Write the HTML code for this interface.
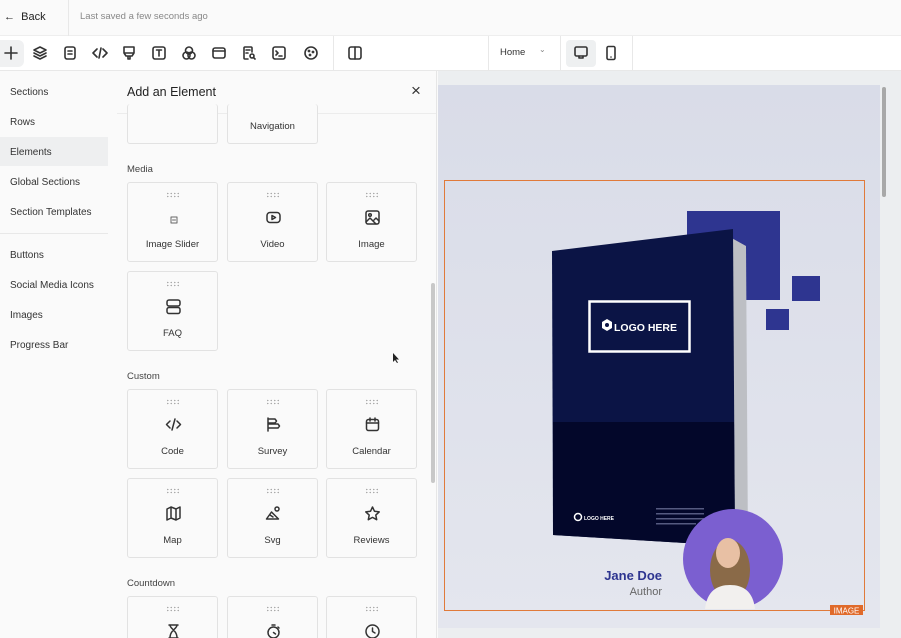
<!DOCTYPE html>
<html><head><meta charset="utf-8"><style>
*{box-sizing:border-box;margin:0;padding:0}
html,body{width:901px;height:638px;overflow:hidden}
body{font-family:"Liberation Sans",sans-serif;background:#fafafa;position:relative;color:#222}
.abs{position:absolute}
svg{display:block}
.ic{position:absolute;width:16px;height:16px;fill:none;stroke:#333;stroke-width:1.6;stroke-linecap:round;stroke-linejoin:round}
.nav{position:absolute;left:10px;font-size:10px;color:#333}
.card{position:absolute;width:91px;height:80px;border:1px solid #e2e2e2;border-radius:3px;background:#fafafa}
.card .dots{position:absolute;top:9px;left:38px;width:14px;height:6px;background-image:radial-gradient(circle,#aaa 0.7px,transparent 0.8px);background-size:3.5px 3px}
.card .lb{position:absolute;left:0;right:0;top:56px;text-align:center;font-size:9.5px;color:#333}
.card svg{position:absolute;left:37px;top:26px;width:17px;height:17px;fill:none;stroke:#333;stroke-width:1.5;stroke-linecap:round;stroke-linejoin:round}
.sec{position:absolute;left:127px;font-size:9.5px;color:#444}
</style></head><body>
<!-- top bar -->
<div class="abs" style="left:0;top:0;width:901px;height:36px;background:#fafafa;border-bottom:1px solid #eee"></div>
<div class="abs" style="left:4px;top:11px;font-size:11px;color:#222">&larr;&nbsp;&nbsp;Back</div>
<div class="abs" style="left:68px;top:0;width:1px;height:36px;background:#e8e8e8"></div>
<div class="abs" style="left:80px;top:11px;font-size:9.5px;color:#888">Last saved a few seconds ago</div>
<!-- toolbar -->
<div class="abs" style="left:0;top:36px;width:901px;height:35px;background:#fff;border-bottom:1px solid #e8e8e8"></div>
<div class="abs" style="left:0;top:40px;width:24px;height:27px;background:#f0f1f2;border-radius:0 6px 6px 0"></div>
<svg class="ic" style="left:3px;top:45px" viewBox="0 0 16 16"><path d="M8 2v12M2 8h12"/></svg>
<svg class="ic" style="left:32px;top:45px" viewBox="0 0 16 16"><path d="M8 2l6 3-6 3-6-3z M2 8l6 3 6-3 M2 11l6 3 6-3"/></svg>
<svg class="ic" style="left:62px;top:45px" viewBox="0 0 16 16"><rect x="3" y="2" width="10" height="12" rx="2"/><path d="M6 6h4M6 9h4"/></svg>
<svg class="ic" style="left:92px;top:45px" viewBox="0 0 16 16"><path d="M5 4L1 8l4 4M11 4l4 4-4 4M9 3L7 13"/></svg>
<svg class="ic" style="left:121px;top:45px" viewBox="0 0 16 16"><path d="M3 2h10v6H3z M3 8h10l-2 3H5z M7 11v3h2v-3"/></svg>
<svg class="ic" style="left:151px;top:45px" viewBox="0 0 16 16"><rect x="2" y="2" width="12" height="12" rx="2"/><path d="M5.5 5h5M8 5v6"/></svg>
<svg class="ic" style="left:181px;top:45px" viewBox="0 0 16 16"><circle cx="8" cy="5.5" r="3.5"/><circle cx="5.5" cy="10.5" r="3.5"/><circle cx="10.5" cy="10.5" r="3.5"/></svg>
<svg class="ic" style="left:211px;top:45px" viewBox="0 0 16 16"><rect x="2" y="3" width="12" height="10" rx="2"/><path d="M2 6h12"/></svg>
<svg class="ic" style="left:241px;top:45px" viewBox="0 0 16 16"><path d="M11 7V3a1 1 0 0 0-1-1H4a1 1 0 0 0-1 1v10a1 1 0 0 0 1 1h3M5 5h4M5 8h2"/><circle cx="11" cy="11" r="2"/><path d="M12.5 12.5L14 14"/></svg>
<svg class="ic" style="left:271px;top:45px" viewBox="0 0 16 16"><rect x="2" y="2" width="12" height="12" rx="2"/><path d="M5 6l2 2-2 2M8 11h3"/></svg>
<svg class="ic" style="left:303px;top:45px" viewBox="0 0 16 16"><circle cx="8" cy="8" r="6"/><circle cx="6" cy="6" r=".6"/><circle cx="10" cy="7" r=".6"/><circle cx="7" cy="10" r=".6"/></svg>
<div class="abs" style="left:333px;top:36px;width:1px;height:35px;background:#e8e8e8"></div>
<svg class="ic" style="left:347px;top:45px" viewBox="0 0 16 16"><rect x="2" y="2" width="12" height="12" rx="2"/><path d="M8 2v12"/></svg>
<div class="abs" style="left:488px;top:36px;width:1px;height:35px;background:#e8e8e8"></div>
<div class="abs" style="left:500px;top:47px;font-size:9.5px;color:#333">Home</div>
<div class="abs" style="left:539px;top:45px;font-size:8px;color:#888">&#8964;</div>
<div class="abs" style="left:560px;top:36px;width:1px;height:35px;background:#e8e8e8"></div>
<div class="abs" style="left:566px;top:40px;width:30px;height:27px;background:#eef0f1;border-radius:4px"></div>
<svg class="ic" style="left:573px;top:45px" viewBox="0 0 16 16"><rect x="2" y="2" width="12" height="9" rx="1.5"/><path d="M6 11v2h4v-2"/></svg>
<svg class="ic" style="left:603px;top:45px" viewBox="0 0 16 16"><rect x="4" y="1.5" width="8" height="13" rx="1.5"/><path d="M8 12h.01"/></svg>
<div class="abs" style="left:632px;top:36px;width:1px;height:35px;background:#e8e8e8"></div>
<!-- left nav -->
<div class="abs" style="left:0;top:71px;width:117px;height:567px;background:#fafafa"></div>
<div class="abs" style="left:0;top:137px;width:108px;height:29px;background:#eeeff0"></div>
<div class="nav" style="top:87px">Sections</div>
<div class="nav" style="top:117px">Rows</div>
<div class="nav" style="top:147px">Elements</div>
<div class="nav" style="top:177px">Global Sections</div>
<div class="nav" style="top:207px">Section Templates</div>
<div class="abs" style="left:0;top:233px;width:108px;height:1px;background:#e8e8e8"></div>
<div class="nav" style="top:250px">Buttons</div>
<div class="nav" style="top:280px">Social Media Icons</div>
<div class="nav" style="top:310px">Images</div>
<div class="nav" style="top:340px">Progress Bar</div>
<!-- panel -->
<div class="abs" style="left:117px;top:71px;width:320px;height:567px;background:#fafafa;border-right:1px solid #e6e6e6;overflow:hidden">
<div class="abs" style="left:10px;top:14px;font-size:12.5px;color:#222">Add an Element</div>
<div class="abs" style="left:294px;top:10px;font-size:17px;color:#333">&times;</div>
<div class="abs" style="left:0;top:42px;width:320px;height:1px;background:#ececec"></div>
<div class="abs" style="left:314px;top:212px;width:4px;height:200px;background:#c8c8c8;border-radius:2px"></div>
<div class="card" style="left:10px;top:33px;height:40px;border-top:none"></div>
<div class="card" style="left:110px;top:33px;height:40px;border-top:none"><div class="lb" style="top:17px">Navigation</div></div>
<div class="sec" style="left:10px;top:93px">Media</div>
<div class="card" style="left:10px;top:111px"><div class="dots"></div><svg viewBox="0 0 17 17" style="stroke-width:1;stroke:#666;top:28px"><rect x="6" y="6" width="6" height="6"/><path d="M7.5 9h3"/></svg><div class="lb">Image Slider</div></div>
<div class="card" style="left:110px;top:111px"><div class="dots"></div><svg viewBox="0 0 17 17"><rect x="2" y="3.5" width="13" height="10" rx="3"/><path d="M7 6.5v4l3.5-2z"/></svg><div class="lb">Video</div></div>
<div class="card" style="left:209px;top:111px"><div class="dots"></div><svg viewBox="0 0 17 17"><rect x="2" y="2" width="13" height="13" rx="2"/><circle cx="6" cy="6" r="1.3"/><path d="M2 13l4-4 6 6M10 11l2-2 3 3"/></svg><div class="lb">Image</div></div>
<div class="card" style="left:10px;top:200px"><div class="dots"></div><svg viewBox="0 0 17 17"><rect x="2" y="2" width="13" height="6" rx="2"/><rect x="2" y="9.5" width="13" height="6" rx="2"/></svg><div class="lb">FAQ</div></div>
<div class="sec" style="left:10px;top:300px">Custom</div>
<div class="card" style="left:10px;top:318px"><div class="dots"></div><svg viewBox="0 0 17 17"><path d="M5 5L1.5 8.5 5 12M12 5l3.5 3.5L12 12M10 3L7 14"/></svg><div class="lb">Code</div></div>
<div class="card" style="left:110px;top:318px"><div class="dots"></div><svg viewBox="0 0 17 17"><path d="M3 2v13M3 3h7l1.5 2-1.5 2H3M3 8h10l1.5 2-1.5 2H3"/></svg><div class="lb">Survey</div></div>
<div class="card" style="left:209px;top:318px"><div class="dots"></div><svg viewBox="0 0 17 17"><rect x="2.5" y="3.5" width="12" height="11" rx="2"/><path d="M2.5 7h12M6 2v3M11 2v3"/></svg><div class="lb">Calendar</div></div>
<div class="card" style="left:10px;top:407px"><div class="dots"></div><svg viewBox="0 0 17 17"><path d="M2 4l4-2 5 2 4-2v11l-4 2-5-2-4 2zM6 2v11M11 4v11"/></svg><div class="lb">Map</div></div>
<div class="card" style="left:110px;top:407px"><div class="dots"></div><svg viewBox="0 0 17 17"><circle cx="12" cy="4" r="2"/><path d="M1.5 14l5-7 7 7zM5 10l3 2"/></svg><div class="lb">Svg</div></div>
<div class="card" style="left:209px;top:407px"><div class="dots"></div><svg viewBox="0 0 17 17"><path d="M8.5 2l2 4.3 4.7.6-3.4 3.2.9 4.6-4.2-2.3-4.2 2.3.9-4.6L1.8 6.9l4.7-.6z"/></svg><div class="lb">Reviews</div></div>
<div class="sec" style="left:10px;top:507px">Countdown</div>
<div class="card" style="left:10px;top:525px"><div class="dots"></div><svg viewBox="0 0 17 17"><path d="M4 2h9M4 15h9M5 2c0 4 7 5 7 13M12 2c0 4-7 5-7 13"/></svg></div>
<div class="card" style="left:110px;top:525px"><div class="dots"></div><svg viewBox="0 0 17 17"><circle cx="8.5" cy="9.5" r="5.5"/><path d="M7 2h3M8.5 9.5l2 1.5M13 4l1 1"/></svg></div>
<div class="card" style="left:209px;top:525px"><div class="dots"></div><svg viewBox="0 0 17 17"><circle cx="8.5" cy="8.5" r="6.5"/><path d="M8.5 5v3.5l2.5 1.5"/></svg></div>
</div>
<!-- canvas -->
<div class="abs" style="left:438px;top:71px;width:463px;height:567px;background:#eceef0"></div>
<div class="abs" style="left:882px;top:87px;width:4px;height:110px;background:#a8a8a8;border-radius:2px"></div>
<svg class="abs" style="left:438px;top:85px" width="442" height="543" viewBox="438 85 442 543">
<defs><linearGradient id="bg" x1="0" y1="0" x2="0" y2="1"><stop offset="0" stop-color="#d9dce8"/><stop offset="1" stop-color="#e4e6ee"/></linearGradient></defs>
<rect x="438" y="85" width="442" height="543" fill="url(#bg)"/>
<rect x="687" y="211" width="93" height="89" fill="#2e3590"/>
<rect x="792" y="276" width="28" height="25" fill="#2e3590"/>
<rect x="766" y="309" width="23" height="21" fill="#2e3590"/>
<polygon points="728,236 746,246 748,548 731,545" fill="#bdbfc4"/>
<polygon points="552,251 733,229 735,546 553,535" fill="#0b1445"/>
<polygon points="553,422 734,422 735,546 553,535" fill="#03072a"/>
<rect x="589.5" y="301.5" width="100" height="50" fill="none" stroke="#fff" stroke-width="2.5"/>
<path d="M602 322l5-3 5 3v6l-5 3-5-3z" fill="#fff"/><circle cx="607" cy="325" r="2" fill="#0b1445"/>
<text x="614" y="331" font-family="Liberation Sans" font-weight="bold" font-size="10.5" fill="#fff">LOGO HERE</text>
<circle cx="578" cy="517" r="3.5" fill="none" stroke="#fff" stroke-width="1.5"/>
<text x="584" y="520" font-family="Liberation Sans" font-weight="bold" font-size="5" fill="#fff">LOGO HERE</text>
<g fill="#555a80"><rect x="656" y="508" width="48" height="1.5"/><rect x="656" y="513" width="48" height="1.5"/><rect x="656" y="518" width="48" height="1.5"/><rect x="656" y="523" width="40" height="1.5"/></g>
<circle cx="733" cy="559" r="50" fill="#7b5fd0"/>
<ellipse cx="730" cy="570" rx="20" ry="30" fill="#8a6a48"/>
<ellipse cx="728" cy="553" rx="12" ry="15" fill="#e8c0a4"/>
<path d="M705 609c2-18 12-24 25-24s23 6 25 24z" fill="#f2f0ee"/>
<text x="662" y="580" text-anchor="end" font-family="Liberation Sans" font-weight="bold" font-size="13" fill="#2e3590">Jane Doe</text>
<text x="662" y="595" text-anchor="end" font-family="Liberation Sans" font-size="11" fill="#666">Author</text>
<rect x="444.5" y="180.5" width="420" height="430" fill="none" stroke="#e07a3a" stroke-width="1"/>
<rect x="830" y="605" width="33" height="10" fill="#e06a2a"/>
<text x="846.5" y="613.5" text-anchor="middle" font-family="Liberation Sans" font-size="8" fill="#fff">IMAGE</text>
</svg>
<svg class="abs" style="left:392px;top:352px" width="8" height="12" viewBox="0 0 8 12"><path d="M1 1v9l2-2 2 3 1-.5-2-3h3z" fill="#222"/></svg>
</body></html>
